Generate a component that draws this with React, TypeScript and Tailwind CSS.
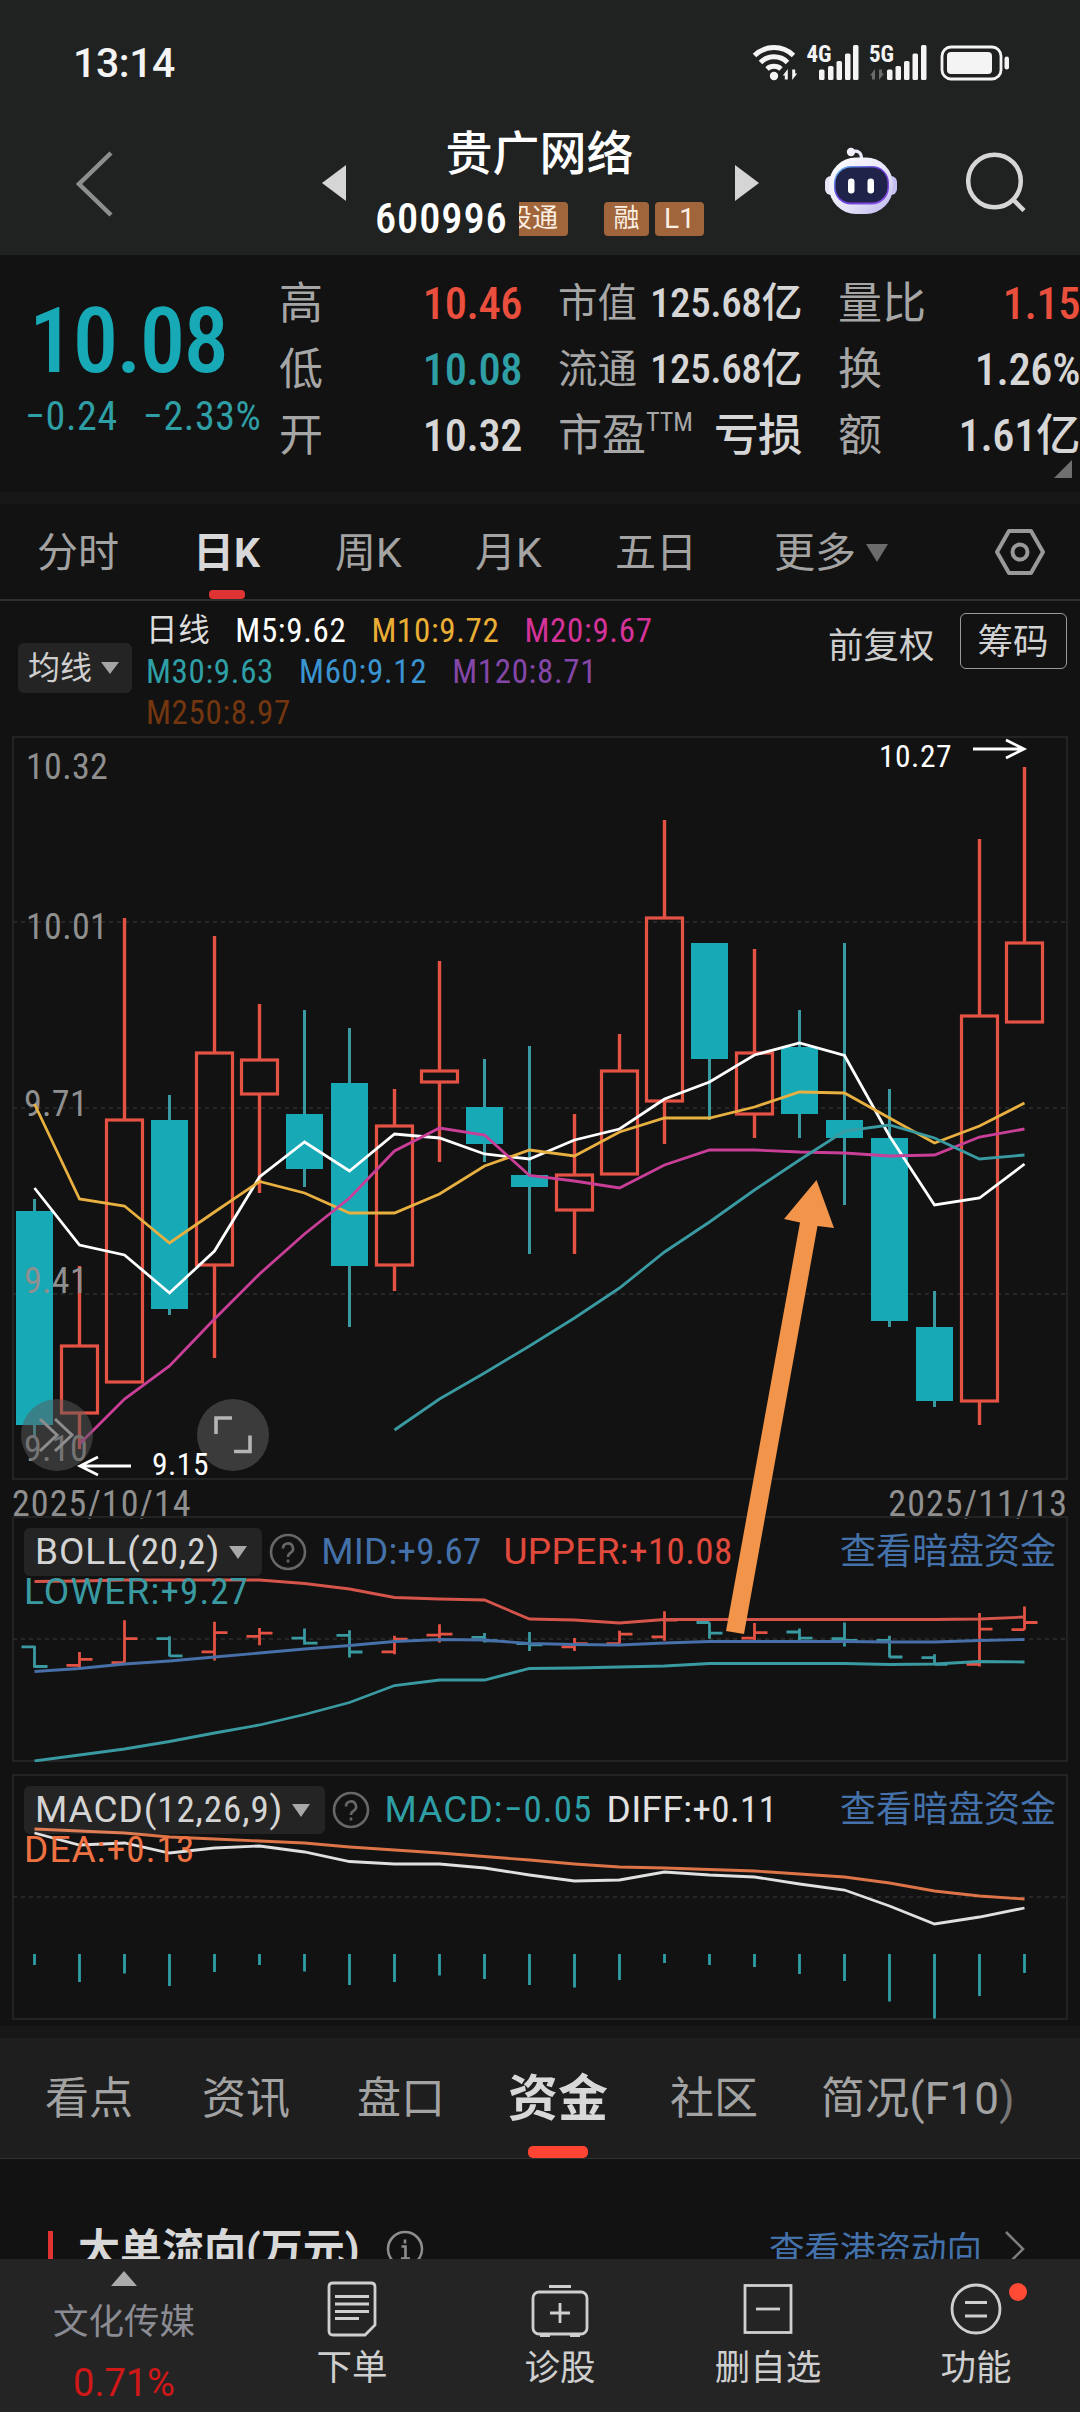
import React from 'react';

interface Candle {
    up: boolean;
    high: number;
    top: number;
    bottom: number;
    low: number;
}

const STEP = 45;
const FIRST_X = 34.5;
const UP = '#e45244';
const DOWN = '#18a9b7';
const DOWN_LINE = '#3a9aa1';

const xAt = (i: number) => FIRST_X + i * STEP;

const c = (up: boolean, high: number, top: number, bottom: number, low: number): Candle => ({ up, high, top, bottom, low });

// daily candles, oldest first, in chart units
const candles: Candle[] = [
    c(false, 1199, 1211, 1425, 1438),
    c(true, 1266, 1346, 1413, 1449),
    c(true, 918, 1120, 1382, 1382),
    c(false, 1095, 1120, 1309, 1315),
    c(true, 936, 1053, 1265, 1358),
    c(true, 1004, 1060, 1094, 1193),
    c(false, 1010, 1114, 1169, 1187),
    c(false, 1028, 1083, 1266, 1327),
    c(true, 1089, 1126, 1265, 1291),
    c(true, 961, 1071, 1082, 1162),
    c(false, 1059, 1107, 1144, 1162),
    c(false, 1046, 1175, 1187, 1254),
    c(true, 1114, 1175, 1210, 1254),
    c(true, 1034, 1071, 1174, 1174),
    c(true, 820, 918, 1101, 1144),
    c(false, 943, 943, 1059, 1120),
    c(true, 949, 1053, 1114, 1138),
    c(false, 1010, 1047, 1114, 1138),
    c(false, 943, 1120, 1138, 1205),
    c(false, 1089, 1138, 1321, 1327),
    c(false, 1291, 1327, 1401, 1407),
    c(true, 839, 1016, 1401, 1425),
    c(true, 767, 943, 1022, 1022),
];

const ma5 = [1188, 1245, 1255, 1293, 1251, 1177, 1142, 1171, 1134, 1138, 1154, 1159, 1140, 1129, 1099, 1082, 1055, 1043, 1055.5, 1136, 1205, 1198, 1164];
const ma10 = [1104, 1199, 1206, 1243, 1212, 1181.5, 1193, 1213, 1213, 1194, 1166, 1150, 1156, 1132, 1118, 1118, 1107, 1092, 1093, 1118, 1143, 1126, 1103];
const ma20 = [1444, 1399, 1366, 1319, 1274, 1234, 1198, 1151, 1128, 1135, 1175.5, 1181, 1188, 1165, 1150, 1150, 1152, 1153, 1156, 1155, 1137, 1129];
const ma30 = [1430, 1399, 1373, 1346, 1318, 1288, 1252, 1222, 1190, 1160, 1131, 1125, 1138, 1159, 1155];

const bollUpper = [1581.5, 1581, 1580, 1580, 1580, 1580, 1583.5, 1589, 1597.5, 1599, 1600, 1619, 1620, 1623, 1619.5, 1619.5, 1619.5, 1619.5, 1619.5, 1619.5, 1619.5, 1619, 1617];
const bollMid = [1671.5, 1668.5, 1664, 1661, 1657, 1653, 1649, 1645.5, 1641.5, 1639.5, 1640, 1643.5, 1644.5, 1645, 1643, 1641.5, 1641.5, 1641.5, 1641.5, 1642, 1642, 1640.5, 1639.5];
const bollLower = [1761, 1755, 1749, 1741.5, 1733, 1725, 1714.5, 1702.5, 1685.5, 1680, 1680, 1668.5, 1668, 1667, 1666, 1663.5, 1663.5, 1663.5, 1663.5, 1664.5, 1664, 1661.5, 1662];

const dea = [1829, 1831, 1833, 1837, 1839, 1841, 1843, 1847, 1850, 1853, 1856.5, 1860, 1864, 1867, 1868, 1869.5, 1871, 1874, 1877, 1883, 1891, 1896, 1899];
const diff = [1833, 1845, 1843, 1853, 1848, 1846, 1852, 1861.5, 1864, 1864, 1868, 1875, 1881, 1880, 1872, 1875, 1877, 1884, 1890, 1906, 1924, 1917, 1908];
const macdBars = [1965, 1982, 1973.5, 1986, 1972, 1965, 1971.5, 1985, 1982, 1975.5, 1979, 1985, 1987.5, 1980, 1963, 1965, 1967, 1974, 1981, 2001.5, 2018.5, 1996, 1973];

const Line: React.FC<{ values: number[]; color: string; start?: number }> = ({ values, color, start = 0 }) => (
    <polyline
        points={values.map((y, i) => `${xAt(i + start)},${y}`).join(' ')}
        fill="none"
        stroke={color}
        strokeWidth={2.8}
    />
);

const Caret: React.FC<{ className?: string }> = ({ className }) => (
    <svg viewBox="0 0 20 14" className={className} fill="currentColor" preserveAspectRatio="none">
        <path d="M0 0h20L10 14z" />
    </svg>
);

const HelpIcon = () => (
    <svg viewBox="0 0 38 38" className="w-[38px] h-[38px] shrink-0" fill="none" stroke="#676767" strokeWidth={2.6}>
        <circle cx="19" cy="19" r="17" />
        <path d="M14 15.5a5 5 0 1 1 7.5 4.3c-1.7 1-2.5 1.9-2.5 4.2" />
        <path d="M19 26.5v3" />
    </svg>
);

const StatusBar = () => (
    <div className="flex h-[126px] items-center justify-between pl-[73px] pr-[71px]">
        <div className="text-[41px] leading-[48px] font-medium text-[#f4f4f4] tracking-[-0.01em]">13:14</div>
        <svg viewBox="752 42 257 42" className="w-[257px] h-[42px]" fill="#f4f4f4">
            <g fill="none" stroke="#f4f4f4" strokeWidth={5}>
                <path d="M754.5 55.5a28 28 0 0 1 39 0" />
                <path d="M760.5 62.5a19 19 0 0 1 27 0" />
                <path d="M767 69a10.5 10.5 0 0 1 14 0" />
            </g>
            <circle cx="774" cy="76" r="4.2" />
            <path d="M782.8 75.5l5-6.5v10.5h-3v-4z" />
            <path d="M797.2 73.5l-5 6.5v-10.5h3v4z" />
            <text x="806.5" y="62" fontSize="23" fontWeight="700" className="font-stretch-condensed">4G</text>
            <rect x="819" y="69.5" width="5.5" height="10.5" rx="1.5" />
            <rect x="828" y="66" width="5.5" height="14" rx="1.5" />
            <rect x="836.5" y="61" width="5.5" height="19" rx="1.5" />
            <rect x="845" y="53.5" width="5.5" height="26.5" rx="1.5" />
            <rect x="853" y="45" width="5.5" height="35" rx="1.5" />
            <text x="869" y="62" fontSize="23" fontWeight="700" className="font-stretch-condensed">5G</text>
            <path d="M870 75.5l5-6.5v10.5h-3v-4z" fill="#6a6c6b" />
            <path d="M884 73.5l-5 6.5v-10.5h3v4z" fill="#6a6c6b" />
            <rect x="887" y="69.5" width="5.5" height="10.5" rx="1.5" />
            <rect x="895.5" y="66" width="5.5" height="14" rx="1.5" />
            <rect x="904" y="61" width="5.5" height="19" rx="1.5" />
            <rect x="912.5" y="53.5" width="5.5" height="26.5" rx="1.5" />
            <rect x="921" y="45" width="5.5" height="35" rx="1.5" />
            <rect x="942" y="47" width="59" height="32" rx="9" fill="none" stroke="#f4f4f4" strokeWidth={2.8} />
            <rect x="947" y="52" width="45" height="22" rx="4" />
            <rect x="1004.5" y="56.5" width="4.5" height="13" rx="2.2" />
        </svg>
    </div>
);

const RobotIcon = () => (
    <svg viewBox="0 0 72 68" className="w-[72px] h-[68px]">
        <defs>
            <linearGradient id="shell" x1="0" y1="0" x2="1" y2="1">
                <stop offset="0" stopColor="#ffffff" />
                <stop offset="0.6" stopColor="#e4e2f7" />
                <stop offset="1" stopColor="#b9b2ee" />
            </linearGradient>
            <linearGradient id="rim" x1="0" y1="0" x2="1" y2="1">
                <stop offset="0" stopColor="#5fc6f0" />
                <stop offset="0.45" stopColor="#6a3fd8" />
                <stop offset="1" stopColor="#8c52e8" />
            </linearGradient>
        </defs>
        <path d="M27 4.5c6-1.5 9.500 1 9.500 7" fill="none" stroke="#e9e8f6" strokeWidth={3.2} />
        <circle cx="26" cy="5" r="4.2" fill="#eeedf8" />
        <rect x="0" y="29" width="14" height="19" rx="6" fill="#e6e4f6" />
        <rect x="58" y="29" width="14" height="19" rx="6" fill="#c5c0ef" />
        <rect x="4" y="10.5" width="64" height="56.5" rx="27" fill="url(#shell)" />
        <rect x="9" y="19" width="55" height="38.5" rx="17" fill="url(#rim)" />
        <rect x="10.5" y="20.5" width="52" height="35" rx="15.5" fill="#202349" />
        <rect x="23" y="31.5" width="6.5" height="15" rx="3.2" fill="#fff" />
        <rect x="42.5" y="31.5" width="6.5" height="15" rx="3.2" fill="#fff" />
    </svg>
);

const TitleBar = () => (
    <div className="flex h-[129px] items-start">
        <svg viewBox="0 0 40 66" className="ml-[75px] mt-[25px] w-10 h-[66px]" fill="none" stroke="#8d8e8e" strokeWidth={4.5}>
            <path d="M36 2L4 33l32 31" />
        </svg>
        <svg viewBox="0 0 24 36" className="ml-[207px] mt-[39px] w-6 h-9" fill="#d5d5d5">
            <path d="M24 0v36L0 18z" />
        </svg>
        <div className="ml-[29px] flex w-[331px] flex-col items-center">
            <div className="mt-[3px] mr-[2px] text-[47px] leading-[50px] font-medium">贵广网络</div>
            <div className="mt-[20px] flex h-[40px] w-full items-center">
                <span className="w-[144px] text-[42.5px] leading-10 font-medium font-stretch-condensed tracking-[0.02em]">600996</span>
                <span className="flex h-[34px] w-[49px] justify-end overflow-hidden rounded-r-[4px] bg-[#a0653a] pr-[10px] text-[26px] leading-[33px] whitespace-nowrap text-[#fbeee2]">股通</span>
                <span className="ml-9 h-[34px] w-[45px] rounded-[4px] bg-[#a0653a] text-center text-[26px] leading-[33px] text-[#fbeee2]">融</span>
                <span className="ml-[6px] h-[34px] w-[49px] rounded-[4px] bg-[#a0653a] text-center text-[28px] leading-[34px] text-[#fbeee2]">L1</span>
            </div>
        </div>
        <svg viewBox="0 0 24 36" className="ml-[29px] mt-[39px] w-6 h-9" fill="#d5d5d5">
            <path d="M0 0v36l24-18z" />
        </svg>
        <div className="ml-[66px] mt-[21px]"><RobotIcon /></div>
        <svg viewBox="0 0 60 60" className="ml-[69px] mt-[26px] w-[60px] h-[60px]" fill="none" stroke="#d6d6d6" strokeWidth={4.5}>
            <circle cx="28.5" cy="29" r="26.3" />
            <path d="M47 47.5l11 11" />
        </svg>
    </div>
);

const Stat: React.FC<{ label: React.ReactNode; value: string; color?: string; small?: boolean }> = ({ label, value, color = 'text-[#d6d6d6]', small = false }) => (
    <div className="flex h-[66px] items-center justify-between whitespace-nowrap">
        <span className={`text-[#a6a6a6] ${small ? 'text-[39.5px]' : 'text-[44px]'}`}>{label}</span>
        <span className={`font-medium font-stretch-condensed tracking-[-0.01em] ${small ? 'text-[41px]' : 'text-[44.5px]'} ${color}`}>{value}</span>
    </div>
);

const Quote = () => (
    <div className="relative flex h-[237px] items-start pt-[16px]">
        <div className="w-[279px]">
            <div className="mt-[18px] pl-[29px] text-[91px] leading-[104px] font-medium text-[#18a9b7] font-stretch-condensed tracking-[-0.02em]">10.08</div>
            <div className="-mt-[4px] flex gap-[25px] pl-[25px] text-[40px] leading-[56px] whitespace-nowrap text-[#2f9fa6] font-stretch-condensed tracking-[0.015em]">
                <span>−0.24</span>
                <span>−2.33%</span>
            </div>
        </div>
        <div className="w-[243px]">
            <Stat label="高" value="10.46" color="text-[#ea4e3d]" />
            <Stat label="低" value="10.08" color="text-[#2f9fa6]" />
            <Stat label="开" value="10.32" />
        </div>
        <div className="ml-[36px] w-[244px]">
            <Stat label="市值" value="125.68亿" small />
            <Stat label="流通" value="125.68亿" small />
            <Stat
                label={<span className="flex items-start">市盈<span className="mt-[1px] text-[26px] leading-[36px] font-stretch-condensed">TTM</span></span>}
                value="亏损"
            />
        </div>
        <div className="ml-[36px] w-[242px]">
            <Stat label="量比" value="1.15" color="text-[#ea4e3d]" />
            <Stat label="换" value="1.26%" />
            <Stat label="额" value="1.61亿" />
        </div>
        <svg viewBox="0 0 18 18" className="absolute right-[8px] top-[205px] w-[18px] h-[18px]" fill="#6f6f6f">
            <path d="M18 0v18H0z" />
        </svg>
    </div>
);

const PeriodTabs = () => (
    <div className="relative flex h-[97px] items-start border-b-2 border-[#2e2e2e] pt-[21px] text-[41px] leading-[56px] whitespace-nowrap text-[#a3a3a3]">
        <span className="w-[160px] pl-[37px]">分时</span>
        <span className="w-[175px] pl-[33px] font-bold text-[#d8d8d8]">日K</span>
        <span className="w-[140px]">周K</span>
        <span className="w-[140px]">月K</span>
        <span className="w-[159px]">五日</span>
        <span className="w-[92px]">更多</span>
        <Caret className="mt-[19px] h-[18px] w-[22px] text-[#6b6b6b]" />
        <svg viewBox="0 0 50 48" className="ml-[107px] mt-[3px] w-[50px] h-12" fill="none" stroke="#999" strokeWidth={4}>
            <path d="M14 3h22l12 21-12 21H14L2 24z" strokeLinejoin="round" />
            <circle cx="25" cy="24" r="7.5" />
        </svg>
        <div className="absolute bottom-0 left-[209px] h-[9px] w-[36px] rounded-[4px] bg-[#e03434]" />
    </div>
);

const MaLegend = () => (
    <div className="flex h-[135px] items-start whitespace-nowrap">
        <div className="ml-[18px] mt-[42px] flex h-[50px] w-[114px] items-center rounded-[6px] bg-[#242424] pl-[10px] text-[32px] text-[#cfcfcf]">
            均线
            <Caret className="ml-[9px] h-3 w-[18px] text-[#a5a5a5]" />
        </div>
        <div className="ml-[14px] mt-[9px] w-[682px] text-[33px] leading-[41px] font-stretch-condensed tracking-[0.02em]">
            <div className="flex gap-[25px] text-white">
                <span className="text-[31.5px] text-[#dcdcdc]">日线</span>
                <span>M5:9.62</span>
                <span className="text-[#eaae35]">M10:9.72</span>
                <span className="text-[#d5339a]">M20:9.67</span>
            </div>
            <div className="flex gap-[25px]">
                <span className="text-[#2f9fa6]">M30:9.63</span>
                <span className="text-[#3a94d0]">M60:9.12</span>
                <span className="text-[#8447a8]">M120:8.71</span>
            </div>
            <div className="text-[#74360f]">M250:8.97</div>
        </div>
        <div className="mt-[24px] text-[35.5px] leading-[42px] text-[#cdcdcd]">前复权</div>
        <div className="ml-[25px] mt-[12px] h-[56px] w-[107px] rounded-[6px] border border-[#9a9a9a] text-center text-[35.5px] leading-[56px] text-[#d2d2d2]">筹码</div>
    </div>
);

const GridLine: React.FC<{ y: number }> = ({ y }) => (
    <line x1={13} x2={1067} y1={y} y2={y} stroke="#272727" strokeWidth={2} strokeDasharray="4 4" />
);

const CandleChart = () => (
    <svg viewBox="0 736 1080 745" className="block h-[745px] w-[1080px]">
        <rect x="13" y="737" width="1054" height="742" fill="none" stroke="#232323" strokeWidth={2} />
        <GridLine y={922} />
        <GridLine y={1108} />
        <GridLine y={1294} />
        {candles.map((k, i) => {
            const x = xAt(i);
            if (!k.up) {
                return (
                    <g key={i}>
                        <line x1={x} x2={x} y1={k.high} y2={k.low} stroke={DOWN_LINE} strokeWidth={3} />
                        <rect x={x - 18.5} y={k.top} width={37} height={k.bottom - k.top} fill={DOWN} />
                    </g>
                );
            }
            return (
                <g key={i} stroke={UP} fill="none">
                    <line x1={x} x2={x} y1={k.high} y2={k.top} strokeWidth={3.4} />
                    <line x1={x} x2={x} y1={k.bottom} y2={k.low} strokeWidth={3.4} />
                    <rect x={x - 18} y={k.top} width={36} height={k.bottom - k.top} strokeWidth={3.2} />
                </g>
            );
        })}
        <g fill="#8f8f8f" fontSize="36" letterSpacing="0.3" className="font-stretch-condensed">
            <text x="26" y="779">10.32</text>
            <text x="26" y="939">10.01</text>
            <text x="24" y="1116">9.71</text>
            <text x="24" y="1293">9.41</text>
            <text x="24" y="1461">9.10</text>
        </g>
        <Line values={ma5} color="#ffffff" />
        <Line values={ma10} color="#e8b040" />
        <Line values={ma20} color="#c93f98" start={1} />
        <Line values={ma30} color={DOWN_LINE} start={8} />
        <g fill="none" stroke="#fff" strokeWidth={2.8}>
            <path d="M973 749h51M1006 740l18 9-18 9" />
            <path d="M131 1466H80M98 1457l-18 9 18 9" />
        </g>
        <circle cx="57" cy="1435" r="36" fill="#5a5a5a" fillOpacity="0.5" />
        <path d="M40 1419l17 16-17 16M55 1419l17 16-17 16" fill="none" stroke="#8d8d8d" strokeWidth={3} />
        <circle cx="233" cy="1435" r="36" fill="#3e3e3e" fillOpacity="0.95" />
        <path d="M232 1418h-16v16M234 1451.5h16v-16" fill="none" stroke="#b5b5b5" strokeWidth={3.6} />
        <g fill="#fff" fontSize="31.5" letterSpacing="0.5" className="font-stretch-condensed">
            <text x="879" y="767">10.27</text>
            <text x="152" y="1475">9.15</text>
        </g>
    </svg>
);

// open tick on the left, close tick on the right
const OhlcBars = () => {
    const scale = (y: number) => 1613 + (y - 839) * 0.0913;
    return (
        <g fill="none" strokeWidth={2.8}>
            {candles.map((k, i) => {
                const x = xAt(i);
                const open = scale(k.up ? k.bottom : k.top);
                const close = scale(k.up ? k.top : k.bottom);
                return (
                    <path
                        key={i}
                        d={`M${x} ${scale(k.high)}V${scale(k.low)}M${x - 13} ${open}H${x}M${x} ${close}H${x + 13}`}
                        stroke={k.up ? UP : DOWN_LINE}
                    />
                );
            })}
        </g>
    );
};

interface PanelProps {
    name: React.ReactNode;
    values: React.ReactNode;
    second: React.ReactNode;
    children: React.ReactNode;
}

const Num: React.FC<{ children: string }> = ({ children }) => (
    <span className="font-stretch-semi-condensed">{children}</span>
);

const IndicatorPanel: React.FC<PanelProps> = ({ name, values, second, children }) => (
    <div className="relative h-[246px]">
        {children}
        <div className="absolute inset-x-0 top-[12px] px-6 text-[37px] leading-[48px] whitespace-nowrap">
            <div className="flex items-center">
                <div className="flex h-12 items-center rounded-[6px] bg-white/8 pl-[11px] pr-[13px] tracking-[0.025em] text-[#d4d4d4]">
                    {name}
                    <Caret className="ml-[9px] mr-[2px] h-[13px] w-[18px] text-[#a8a8a8]" />
                </div>
                <div className="ml-[7px] mr-[14px]"><HelpIcon /></div>
                <div className="flex flex-1">{values}</div>
                <span className="text-[36px] text-[#4471a9]">查看暗盘资金</span>
            </div>
            <div className="-mt-[8px] tracking-[0.03em]">{second}</div>
        </div>
    </div>
);

const BollPanel = () => (
    <IndicatorPanel
        name={<span>BOLL(<Num>20,2</Num>)</span>}
        values={<><span className="mr-[22px] tracking-[0.005em] text-[#4471a9]">MID:<Num>+9.67</Num></span><span className="tracking-[0.01em] text-[#e0493b]">UPPER:<Num>+10.08</Num></span></>}
        second={<span className="text-[#3a9aa1]">LOWER:<Num>+9.27</Num></span>}
    >
        <svg viewBox="0 1516 1080 246" className="block h-[246px] w-[1080px]">
            <rect x="13" y="1517" width="1054" height="244" fill="none" stroke="#232323" strokeWidth={2} />
            <GridLine y={1639} />
            <OhlcBars />
            <Line values={bollUpper} color="#d6554a" />
            <Line values={bollMid} color="#476fa8" />
            <Line values={bollLower} color={DOWN_LINE} />
        </svg>
    </IndicatorPanel>
);

const MacdPanel = () => (
    <IndicatorPanel
        name={<span>MACD(<Num>12,26,9</Num>)</span>}
        values={<><span className="mr-[14px] tracking-[0.03em] text-[#2f9fa6]">MACD:<Num>−0.05</Num></span><span className="tracking-[0.01em] text-[#e2e2e2]">DIFF:<Num>+0.11</Num></span></>}
        second={<span className="text-[#ee7142]">DEA:<Num>+0.13</Num></span>}
    >
        <svg viewBox="0 1774 1080 246" className="block h-[246px] w-[1080px]">
            <rect x="13" y="1775" width="1054" height="244" fill="none" stroke="#232323" strokeWidth={2} />
            <GridLine y={1897} />
            <Line values={diff} color="#e0e0e0" />
            <Line values={dea} color="#dd7448" />
            {macdBars.map((y, i) => (
                <line key={i} x1={xAt(i)} x2={xAt(i)} y1={1954} y2={y} stroke="#2f9fa6" strokeWidth={2.8} />
            ))}
        </svg>
    </IndicatorPanel>
);

const Charts = () => (
    <div className="relative">
        <CandleChart />
        <div className="flex h-[35px] items-end justify-between px-[12px] text-[36px] leading-[24px] tracking-[0.03em] text-[#8f8f8f] font-stretch-condensed">
            <span>2025/10/14</span>
            <span>2025/11/13</span>
        </div>
        <BollPanel />
        <div className="h-3" />
        <MacdPanel />
        <svg viewBox="720 1175 120 465" className="absolute left-[720px] top-[439px] h-[465px] w-[120px]" fill="#f2944a">
            <path d="M816.5 1180l17.500 48-16.500-2-73.500 408-18-3 74-408.500-16-3.500z" />
        </svg>
    </div>
);

const SectionTabs = () => (
    <div className="relative flex h-[121px] items-start border-b border-[#333] bg-[#1e1e1e] pt-[31px] text-[44px] leading-[60px] whitespace-nowrap text-[#a3a3a3]">
        <span className="w-[157px] pl-[45px]">看点</span>
        <span className="w-[155px] pl-[45px]">资讯</span>
        <span className="w-[150px] pl-[45px]">盘口</span>
        <span className="w-[163px] pl-[46px] text-[50px] font-bold text-[#d8d8d8]">资金</span>
        <span className="w-[153px] pl-[45px]">社区</span>
        <span className="pl-[43px] tracking-[0.005em]">简况(F10<span className="text-[#777]">)</span></span>
        <div className="absolute bottom-0 left-[528px] h-3 w-[60px] rounded-[5px] bg-[#ff4433]" />
    </div>
);

const FlowHeading = () => (
    <div className="flex h-[100px] items-start overflow-hidden pt-[64px] leading-[54px] whitespace-nowrap">
        <div className="ml-12 mt-2 h-10 w-[5px] bg-[#e03434]" />
        <div className="ml-[25px] w-[280px] text-[42px] font-bold text-[#d8d8d8]">大单流向(万元)</div>
        <svg viewBox="0 0 38 38" className="ml-[28px] mt-[7px] h-[38px] w-[38px]" fill="none" stroke="#8d8d8d" strokeWidth={2.6}>
            <circle cx="19" cy="19" r="17" />
            <path d="M15.5 16.5h4v12M15 28.5h9M19 9.5v4" />
        </svg>
        <div className="ml-[345px] text-[35.5px] text-[#4471a9]">查看港资动向</div>
        <svg viewBox="0 0 22 38" className="ml-[22px] mt-[7px] h-[38px] w-[22px]" fill="none" stroke="#7d7d7d" strokeWidth={2.6}>
            <path d="M2 2l17 17L2 36" />
        </svg>
    </div>
);

const NavItem: React.FC<{ label: string; children: React.ReactNode }> = ({ label, children }) => (
    <div className="flex flex-1 flex-col items-center pt-[20px]">
        <svg viewBox="0 0 64 60" className="h-[60px] w-16" fill="none" stroke="#cfcfcf" strokeWidth={2.8}>{children}</svg>
        <span className="mt-[6px] text-[35.5px] leading-[46px] text-[#cfcfcf]">{label}</span>
    </div>
);

const BottomBar = () => (
    <div className="relative flex h-[153px] bg-[#242424]">
        <div className="flex w-[248px] flex-col items-center pt-[12px] whitespace-nowrap">
            <svg viewBox="0 0 26 15" className="h-[15px] w-[26px]" fill="#ababab"><path d="M0 15L13 0l13 15z" /></svg>
            <span className="mt-[14px] text-[35.5px] leading-[44px] text-[#8b8b93]">文化传媒</span>
            <span className="mt-[16px] text-[38px] leading-[46px] text-[#d01818]">0.71%</span>
        </div>
        <NavItem label="下单">
            <path d="M13 4h38q4 0 4 4v38l-10 10H13q-4 0-4-4V8q0-4 4-4z" />
            <path d="M15 17.5h34M15 25h34M15 32.5h34M15 39.5h24" />
        </NavItem>
        <NavItem label="诊股">
            <rect x="5" y="13" width="54" height="42" rx="6" />
            <path d="M21 7.5h22M22 34h20M32 24v20M12 56.5h10M42 56.5h10" />
        </NavItem>
        <NavItem label="删自选">
            <rect x="9" y="6.5" width="46" height="47" />
            <path d="M20 30h24" />
        </NavItem>
        <NavItem label="功能">
            <circle cx="32" cy="30" r="24" />
            <path d="M21 23.5h22M21 37h22" />
        </NavItem>
        <div className="absolute left-[1009px] top-[24px] h-[18px] w-[18px] rounded-full bg-[#ff4a35]" />
    </div>
);

export default function App() {
    return (
        <div className="h-[2412px] w-[1080px] overflow-hidden bg-[#121212] text-white font-['Roboto','Noto_Sans_CJK_SC',sans-serif]">
            <div className="bg-[#202221]">
                <StatusBar />
                <TitleBar />
            </div>
            <Quote />
            <div className="h-3 bg-[#171717]" />
            <PeriodTabs />
            <MaLegend />
            <Charts />
            <div className="mt-[6px] h-3 bg-[#171717]" />
            <SectionTabs />
            <FlowHeading />
            <BottomBar />
        </div>
    );
}
